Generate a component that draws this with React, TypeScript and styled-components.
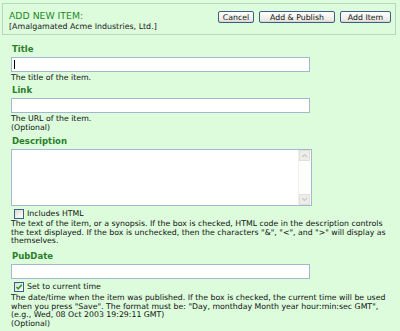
import React from "react";
import styled, { createGlobalStyle } from "styled-components";

const Global = createGlobalStyle`
  html, body { margin: 0; padding: 0; }
  body {
    background: #dcfcdc;
    font-family: "DejaVu Sans", Verdana, sans-serif;
    color: #222;
  }
`;

const Page = styled.div`
  width: 400px;
  height: 331px;
  box-sizing: border-box;
  padding: 3px 4px 0 2px;
  overflow: hidden;
`;

const Header = styled.div`
  display: flex;
  justify-content: space-between;
  align-items: flex-start;
  border: 1px solid #bcd6bc;
  padding: 6px 4px 4px 6px;
  height: 32px;
  box-sizing: border-box;
`;

const HeaderTitle = styled.div`
  display: flex;
  flex-direction: column;
`;

const Heading = styled.div`
  font-size: 9.3px;
  color: #1f8a1f;
  line-height: 12px;
`;

const Sub = styled.div`
  font-size: 7.9px;
  line-height: 10px;
  color: #1a1a1a;
`;

const Buttons = styled.div`
  display: flex;
  gap: 5px;
  padding-top: 1px;
`;

const Btn = styled.button<{ $w: number }>`
  width: ${(p) => p.$w}px;
  height: 12px;
  padding: 0;
  font-family: "DejaVu Sans", Verdana, sans-serif;
  font-size: 7.8px;
  color: #111;
  border: 1px solid #3d5f86;
  border-radius: 2px;
  background: linear-gradient(#ffffff, #ecebe6 80%, #d6d3c8);
  display: flex;
  align-items: center;
  justify-content: center;
`;

const Form = styled.div`
  padding: 6px 0 0 9px;
  display: flex;
  flex-direction: column;
`;

const Label = styled.div<{ $mt?: number }>`
  font-size: 8.5px;
  font-weight: bold;
  color: #2b7d2b;
  line-height: 12px;
  margin-top: ${(p) => p.$mt ?? 0}px;
  margin-left: 1px;
`;

const Input = styled.div<{ $mt?: number }>`
  width: 299px;
  height: 15px;
  box-sizing: border-box;
  border: 1px solid #a4b7d2;
  background: #fff;
  margin-top: ${(p) => p.$mt ?? 2}px;
  position: relative;
`;

const Caret = styled.span`
  position: absolute;
  left: 2px;
  top: 2px;
  width: 1px;
  height: 9px;
  background: #000;
`;

const TextArea = styled.div`
  width: 301px;
  height: 57px;
  box-sizing: border-box;
  border: 1px solid #a4b7d2;
  background: #fff;
  margin-top: 2px;
  display: flex;
  justify-content: flex-end;
`;

const ScrollBar = styled.div`
  width: 12px;
  display: flex;
  flex-direction: column;
  justify-content: space-between;
  border-left: 1px solid #f0f0ec;
  background: #fdfdfb;
`;

const ScrollBtn = styled.div`
  width: 11px;
  height: 11px;
  background: #eeeee6;
  border: 1px solid #e0e0d8;
  box-sizing: border-box;
  display: flex;
  align-items: center;
  justify-content: center;
`;

const Help = styled.div<{ $mt?: number }>`
  font-size: 7.8px;
  line-height: 8.4px;
  color: #111;
  margin-top: ${(p) => p.$mt ?? 2}px;
  width: 386px;
`;

const CheckRow = styled.label`
  display: flex;
  align-items: center;
  gap: 3px;
  font-size: 7.8px;
  line-height: 10px;
  margin-top: 3px;
  margin-left: 3px;
  color: #111;
`;

const Box = styled.span`
  width: 10px;
  height: 10px;
  box-sizing: border-box;
  border: 1px solid #3d5f86;
  background: linear-gradient(135deg, #dcdcd4, #ffffff);
  display: inline-flex;
  align-items: center;
  justify-content: center;
`;

const Arrow = ({ up }: { up?: boolean }) => (
  <svg width="7" height="5" viewBox="0 0 7 5">
    <path d={up ? "M1 4 L3.5 1.5 L6 4" : "M1 1 L3.5 3.5 L6 1"} fill="none" stroke="#c4c8d8" strokeWidth="1.2" />
  </svg>
);

export default function App() {
  return (
    <>
      <Global />
      <Page>
        <Header>
          <HeaderTitle>
            <Heading>ADD NEW ITEM:</Heading>
            <Sub>[Amalgamated Acme Industries, Ltd.]</Sub>
          </HeaderTitle>
          <Buttons>
            <Btn $w={36}>Cancel</Btn>
            <Btn $w={76}>Add &amp; Publish</Btn>
            <Btn $w={51}>Add Item</Btn>
          </Buttons>
        </Header>
        <Form>
          <Label $mt={2}>Title</Label>
          <Input>
            <Caret />
          </Input>
          <Help>The title of the item.</Help>
          <Label $mt={2}>Link</Label>
          <Input />
          <Help>
            The URL of the item.
            <br />
            (Optional)
          </Help>
          <Label $mt={3}>Description</Label>
          <TextArea>
            <ScrollBar>
              <ScrollBtn>
                <Arrow up />
              </ScrollBtn>
              <ScrollBtn>
                <Arrow />
              </ScrollBtn>
            </ScrollBar>
          </TextArea>
          <CheckRow>
            <Box />
            Includes HTML
          </CheckRow>
          <Help $mt={1}>
            The text of the item, or a synopsis. If the box is checked, HTML code in the description controls the text
            displayed. If the box is unchecked, then the characters "&amp;", "&lt;", and "&gt;" will display as
            themselves.
          </Help>
          <Label $mt={5}>PubDate</Label>
          <Input $mt={2} />
          <CheckRow>
            <Box>
              <svg width="8" height="8" viewBox="0 0 8 8">
                <path d="M1.5 4 L3.2 5.8 L6.8 1.8" fill="none" stroke="#21a121" strokeWidth="1.6" />
              </svg>
            </Box>
            Set to current time
          </CheckRow>
          <Help $mt={2}>
            The date/time when the item was published. If the box is checked, the current time will be used when you
            press "Save". The format must be: "Day, monthday Month year hour:min:sec GMT",
            <br />
            (e.g., Wed, 08 Oct 2003 19:29:11 GMT)
            <br />
            (Optional)
          </Help>
        </Form>
      </Page>
    </>
  );
}
